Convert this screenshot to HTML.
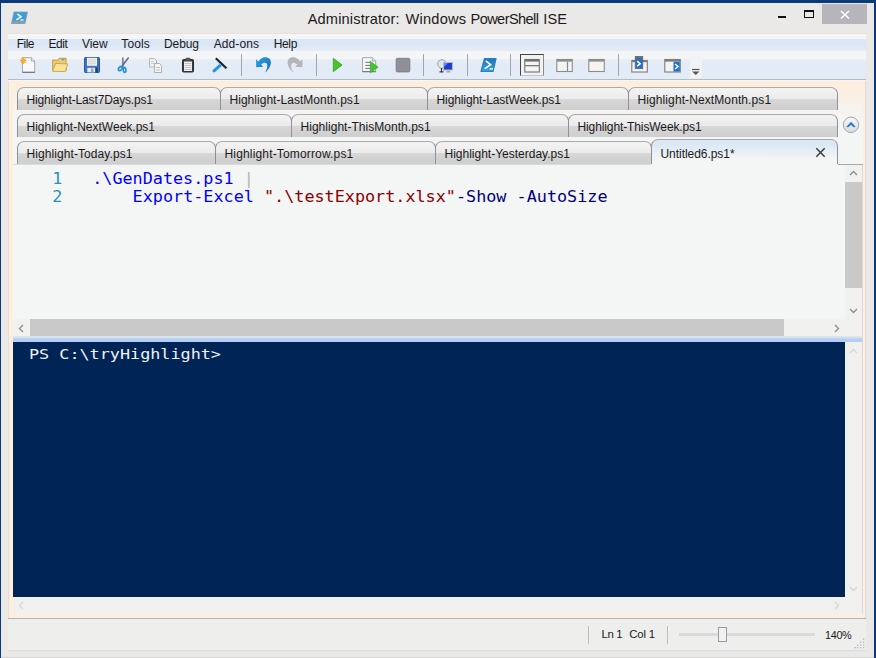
<!DOCTYPE html>
<html lang="en">
<head>
<meta charset="utf-8">
<title>Administrator: Windows PowerShell ISE</title>
<style>
html,body{margin:0;padding:0;}
body{width:876px;height:658px;overflow:hidden;background:#0a3a7c;font-family:"Liberation Sans",sans-serif;}
#win{position:absolute;left:0;top:0;width:876px;height:658px;background:#0a3a7c;overflow:hidden;}
.abs{position:absolute;}
#frame{left:1px;top:3px;width:873px;height:655px;background:#ebe9e8;}
#title{left:0;top:9px;width:876px;font-size:14.6px;color:#1a1a1a;line-height:20px;white-space:nowrap;}
#closebtn{left:822px;top:4px;width:45px;height:20px;background:#b5b5bb;}
#panel{left:8px;top:33px;width:858px;height:585px;background:#feeedd;box-shadow:inset 1px 0 0 #eadcd3, inset -1px 0 0 #e6dcd6;}
#menuwrap{left:8px;top:33px;width:858px;height:47.5px;background:#f3f5f7;box-shadow:inset 0 1px 0 #e8dfda;}
.band1{left:0;top:6.4px;width:858px;height:11.6px;background:linear-gradient(#dbe6f6,#dce7f6 55%,#e7edf6);}
.band2{left:0;top:26.4px;width:858px;height:20.1px;background:linear-gradient(#e8eef6,#e3ebf6 5px);}
.band3{left:0;top:46.4px;width:858px;height:1.1px;background:#b4bcc8;}
.menu{position:absolute;top:37px;font-size:12px;line-height:14px;color:#1a1a1a;white-space:nowrap;}
.sep{position:absolute;top:54px;width:1px;height:21.5px;background:#a2a4aa;}
.ico{position:absolute;overflow:visible;}
#tabbg{left:13px;top:81px;width:850px;height:83px;background:linear-gradient(#feeedd 0,#feeedd 4px,#f9f1e9 20px,#f5f5f3 34px,#f4f6f6 42px);}
.tab{position:absolute;height:23px;border:1px solid #8e8f97;border-top-color:#a9aaae;border-bottom:none;border-radius:7px 7px 0 0;box-sizing:border-box;
 background:linear-gradient(#f5f3f1 0%,#f1f0f0 20%,#ebeaec 49%,#dad7d7 51%,#d4d3d4 68%,#cfcfcf 100%);font-size:12px;line-height:24px;color:#1a1a1a;white-space:nowrap;padding-left:8.5px;}
.tab.r1{top:87px;}
.tab.r2{top:114px;}
.tab.r3{top:141px;}
.tab.act{background:linear-gradient(#dce8f6 0,#dce8f6 4.5px,#e8eff6 12px,#f4f6f6 20px);height:25px;top:139px;line-height:28px;}
#editor{left:13px;top:164px;width:832px;height:155px;background:#f4f6f6;}
.code{position:absolute;font-family:"DejaVu Sans Mono","Liberation Mono",monospace;font-size:16.8px;line-height:19px;white-space:pre;transform:scaleY(0.91);transform-origin:0 15px;}
.ln{color:#2b91af;}
.cmd{color:#0000ff;}
.str{color:#8b0000;}
.par{color:#000080;}
.op{color:#b4b4b4;}
#vs1{left:845px;top:164px;width:18px;height:156px;background:#f1f1f0;}
#vs1 .thumb{position:absolute;left:0;top:18px;width:17px;height:106px;background:#c9c9c9;}
#hs1{left:13px;top:319px;width:850px;height:17px;background:#f1f1f0;}
#hs1 .thumb{position:absolute;left:17px;top:0;width:754px;height:17px;background:#c9c9c9;}
#split{left:13px;top:336px;width:850px;height:6px;background:linear-gradient(#e5e5e6 0,#e5e5e6 1.5px,#cfdff6 1.5px,#b6d0f6 3px,#b2cef6 5px,#b2cef6 6px);}
#console{left:13px;top:341.5px;width:832px;height:255.5px;background:#012456;}
#vs2{left:845px;top:342px;width:18px;height:255px;background:#f0f0ef;}
#hs2{left:13px;top:597px;width:850px;height:17px;background:#f0f0ef;}
#ctext{left:16px;top:2.9px;transform:scaleY(0.86);color:#f2f2f2;}
#status{left:8px;top:619px;width:858px;height:31px;background:#eeeeed;box-shadow:0 1px 0 #e6dcd5, 0 2px 0 #dfe7f2;}
#sline{left:8px;top:618px;width:858px;height:1px;background:#b4b4b8;}
.st{position:absolute;font-size:12px;line-height:14px;color:#1a1a1a;white-space:nowrap;}
#title span{position:absolute;top:0;}
</style>
</head>
<body>
<div id="win">
<div id="frame" class="abs"></div>
<div id="title" class="abs"><span style="left:307.7px;letter-spacing:0.15px">Administrator:</span><span style="left:405.5px;letter-spacing:0.24px">Windows</span><span style="left:470.5px;letter-spacing:-0.59px">PowerShell</span><span style="left:543.3px;letter-spacing:0.1px">ISE</span></div>
<div id="closebtn" class="abs"></div>
<div id="panel" class="abs"></div>
<div id="menuwrap" class="abs"><div class="abs band1"></div><div class="abs band2"></div><div class="abs band3"></div></div>
<div class="menu" style="left:16.8px;letter-spacing:-0.54px">File</div>
<div class="menu" style="left:48.4px;letter-spacing:-0.40px">Edit</div>
<div class="menu" style="left:82px;letter-spacing:-0.05px">View</div>
<div class="menu" style="left:121.3px;letter-spacing:0.08px">Tools</div>
<div class="menu" style="left:164px;letter-spacing:-0.08px">Debug</div>
<div class="menu" style="left:213.8px;letter-spacing:0.07px">Add-ons</div>
<div class="menu" style="left:273.7px;letter-spacing:-0.35px">Help</div>
<svg class="ico" style="left:20px;top:57px" width="16" height="16" viewBox="0 0 16 16"><path d="M2.500 0.700h8.800l3.400 3.400v11.200h-12.200z" fill="#f8f8f8" stroke="#a2a2aa" stroke-width="0.900"/><path d="M2.300 15.300h12.600" stroke="#6a6a72" stroke-width="1"/><path d="M11.300 0.700v3.400h3.400" fill="#e6e6ea" stroke="#a2a2aa" stroke-width="0.900"/><path d="M3.300 0.300v6.600M0 3.600h6.600M1 1.300l4.600 4.600M5.600 1.300l-4.600 4.600" stroke="#f7a81e" stroke-width="1.100"/><circle cx="3.300" cy="3.600" r="1.700" fill="#f9b020"/></svg>
<svg class="ico" style="left:52px;top:57px" width="16" height="16" viewBox="0 0 16 16"><path d="M0.700 13.500v-10.500h5.600l0.800-1.800h7v3.300v9z" fill="#ecca72" stroke="#c49c3c" stroke-width="0.900" stroke-linejoin="round"/><rect x="9.600" y="1.700" width="2.800" height="1.500" fill="#4a9ce6"/><path d="M3.600 6.400l12.100 0.500l-2.500 7.700l-12.700-0.300z" fill="#f8e29a" stroke="#c8a244" stroke-width="0.900" stroke-linejoin="round"/></svg>
<svg class="ico" style="left:84px;top:57px" width="16" height="16" viewBox="0 0 16 16"><rect x="0.500" y="0.500" width="15" height="15" rx="0.800" fill="#3a74c4" stroke="#2a5aa6"/><rect x="3" y="0.800" width="10" height="8" fill="#f4f4f2"/><path d="M4 2.800h8M4 4.800h8M4 6.800h8" stroke="#c8c4b8" stroke-width="0.800"/><rect x="3.300" y="10.800" width="8" height="4.600" fill="#e8ecf2"/><rect x="7" y="11.500" width="2.500" height="3.900" fill="#9aa4b4"/><rect x="11.300" y="10.800" width="2.400" height="4.600" fill="#1f3f7a"/></svg>
<svg class="ico" style="left:116px;top:57px" width="16" height="16" viewBox="0 0 16 16"><path d="M6.800 0.500L7 10.500" stroke="#6c7480" stroke-width="1.500" fill="none"/><path d="M12.600 0.500L5 10.500" stroke="#5b6f86" stroke-width="1.500" fill="none"/><ellipse cx="4.300" cy="11.600" rx="1.500" ry="2.400" fill="none" stroke="#1f8fe0" stroke-width="1.600" transform="rotate(40 4.300 11.600)"/><ellipse cx="8.600" cy="13" rx="1.300" ry="2.400" fill="none" stroke="#1f8fe0" stroke-width="1.600" transform="rotate(-5 8.600 13)"/></svg>
<svg class="ico" style="left:148px;top:57px" width="16" height="16" viewBox="0 0 16 16"><path d="M1.500 1.500h5l2 2v6.500h-7z" fill="#f0f0ee" stroke="#b8b8b8"/><path d="M3 4.500h3M3 6.500h4" stroke="#c4c4c4" stroke-width="0.800"/><path d="M6.500 6.500h5l2 2v7h-7z" fill="#f5f5f3" stroke="#b0b0b0"/><path d="M8 10.500h4M8 13h4" stroke="#b4b4b4" stroke-width="0.800"/></svg>
<svg class="ico" style="left:180px;top:57px" width="16" height="16" viewBox="0 0 16 16"><rect x="2.500" y="2.500" width="11" height="12.500" rx="1" fill="#3a3a40" stroke="#2a2a30"/><rect x="4" y="4.500" width="8" height="9.500" fill="#f2f2f2"/><path d="M4.500 6.500h7M4.500 8.500h7M4.500 10.500h7M4.500 12.500h7" stroke="#b5b5b5" stroke-width="0.800"/><rect x="5.500" y="0.800" width="5" height="3" rx="1" fill="#55555c"/></svg>
<svg class="ico" style="left:211px;top:57px" width="16" height="16" viewBox="0 0 16 16"><path d="M10.300 7.300l-7.300 6.500" stroke="#2492e2" stroke-width="3" stroke-linecap="round"/><path d="M4.800 1.200l10.700 10" stroke="#1c1c24" stroke-width="2"/><path d="M4 2.400l10.600 10" stroke="#7cc0f0" stroke-width="0.900"/></svg>
<svg class="ico" style="left:255px;top:57px" width="16" height="16" viewBox="0 0 16 16"><defs><linearGradient id="ug" x1="0" y1="0" x2="1" y2="1"><stop offset="0" stop-color="#2aa4ea"/><stop offset="1" stop-color="#1765bd"/></linearGradient></defs><path d="M1 2.200L1.200 10.200L8.200 9.700L6.200 7.600C8.500 5.200 12 5.200 12.300 8.200C12.500 10.800 11.400 13.200 10.200 15.600C13.800 12.400 16.400 8.200 15.800 4.200C15 -0.200 9 -1.200 5.200 2.200L3.400 4.400Z" fill="url(#ug)"/></svg>
<svg class="ico" style="left:287px;top:57px" width="16" height="16" viewBox="0 0 16 16"><g transform="translate(16.500 0) scale(-1 1)"><path d="M1 2.200L1.200 10.200L8.200 9.700L6.200 7.600C8.500 5.200 12 5.200 12.300 8.200C12.500 10.800 11.400 13.200 10.200 15.600C13.800 12.400 16.400 8.200 15.800 4.200C15 -0.200 9 -1.200 5.200 2.200L3.400 4.400Z" fill="#b4b5ba"/></g></svg>
<svg class="ico" style="left:329px;top:57px" width="16" height="16" viewBox="0 0 16 16"><path d="M4.300 1.300l8.800 6.700l-8.800 6.700z" fill="#45c42e" stroke="#35a226" stroke-width="0.800"/></svg>
<svg class="ico" style="left:361px;top:57px" width="17" height="16" viewBox="0 0 17 16"><path d="M1.500 0.600h9.800l3.400 3.400v10.600h-13.200z" fill="#f7f7f7" stroke="#a0a0a8" stroke-width="0.900"/><path d="M1.300 14.700h13.600" stroke="#70707a" stroke-width="1"/><path d="M11.300 0.600v3.400h3.400" fill="#e8e8ec" stroke="#a0a0a8" stroke-width="0.900"/><path d="M4.300 5.300h5M4.300 8.400h5M4.300 11.400h5" stroke="#6a7088" stroke-width="1"/><path d="M9.300 4.200l7.800 6l-7.800 5.600z" fill="#46c42e" stroke="#38a828" stroke-width="0.700"/></svg>
<svg class="ico" style="left:395px;top:57px" width="16" height="16" viewBox="0 0 16 16"><rect x="1.200" y="1.300" width="13.600" height="13.600" rx="1.200" fill="#8f9097" stroke="#808189"/></svg>
<svg class="ico" style="left:437px;top:57px" width="16" height="16" viewBox="0 0 16 16"><circle cx="5" cy="7" r="4.300" fill="#dfe5ea" stroke="#9aa3ab"/><path d="M4.500 11v3.500M2.500 14.800h4" stroke="#3a3a3a" stroke-width="1.200"/><rect x="6.500" y="5.500" width="9" height="7.500" fill="#1a3fd0" stroke="#b8bcc4"/><path d="M7 6l4 0 -4 4z" fill="#5a86ee"/><path d="M9 14.800h4.500M11.200 13v2" stroke="#c9a27a" stroke-width="1.200"/></svg>
<svg class="ico" style="left:480px;top:57px" width="17" height="16" viewBox="0 0 17 16"><defs><linearGradient id="pg" x1="0" y1="0" x2="0" y2="1"><stop offset="0" stop-color="#1b74bc"/><stop offset="1" stop-color="#38a4e4"/></linearGradient></defs><path d="M4.500 1.500h11.500l-3 13h-12z" fill="url(#pg)" stroke="#2a7fc4" stroke-width="1.200" stroke-linejoin="round"/><path d="M5.800 3.800l4.700 3.800l-5.700 4" fill="none" stroke="#fff" stroke-width="1.700"/><path d="M9.800 11.800h3.200" stroke="#e8f2fa" stroke-width="1.600"/></svg>
<div class="abs" style="left:520px;top:54px;width:24px;height:22px;box-sizing:border-box;border:1px solid #444;border-bottom-color:#c4c4c4;border-right-color:#8a8a8a;background:#f1f2f4"></div>
<svg class="ico" style="left:524px;top:57px" width="16" height="16" viewBox="0 0 16 16"><rect x="0.800" y="2.500" width="14.500" height="12.500" fill="#f5f5f5" stroke="#707070" stroke-width="1.100"/><path d="M1 3.600h14" stroke="#707070" stroke-width="2"/><path d="M1 8.700h14" stroke="#707070" stroke-width="1.200"/></svg>
<svg class="ico" style="left:556px;top:57px" width="17" height="16" viewBox="0 0 17 16"><rect x="0.800" y="2.500" width="15.500" height="12" fill="#f3f3f3" stroke="#8c8c8c" stroke-width="1.100"/><path d="M1 3.600h15" stroke="#8c8c8c" stroke-width="2"/><path d="M11.500 4.500v10" stroke="#8c8c8c" stroke-width="1.200"/></svg>
<svg class="ico" style="left:588px;top:57px" width="17" height="16" viewBox="0 0 17 16"><rect x="0.800" y="2.500" width="15.500" height="12" fill="#f7f4f0" stroke="#8c8c8c" stroke-width="1.100"/><path d="M1 3.600h15" stroke="#8c8c8c" stroke-width="2"/></svg>
<svg class="ico" style="left:631px;top:56px" width="17" height="17" viewBox="0 0 17 17"><rect x="0.800" y="4.500" width="15.500" height="11.500" fill="#f3f3f3" stroke="#7c7c7c" stroke-width="1.100"/><path d="M1 5.300h15" stroke="#7c7c7c" stroke-width="1.800"/><rect x="4.300" y="0.600" width="7.400" height="12" fill="#1d6fd0" stroke="#6a6a6a" stroke-width="0.900"/><path d="M4.300 1.500h7.400" stroke="#6e6e6e" stroke-width="2"/><path d="M6.200 5.200l3 2.500l-3 2.500" fill="none" stroke="#fff" stroke-width="1.500"/></svg>
<svg class="ico" style="left:664px;top:57px" width="17" height="16" viewBox="0 0 17 16"><rect x="0.800" y="2.500" width="15.500" height="12.500" fill="#f3f3f3" stroke="#7c7c7c" stroke-width="1.100"/><path d="M1 3.600h15" stroke="#7c7c7c" stroke-width="2"/><rect x="9.500" y="4.800" width="6.300" height="9.700" fill="#1d6fd0"/><path d="M11 7l3 2.500l-3 2.500" fill="none" stroke="#fff" stroke-width="1.500"/></svg>
<div class="abs" style="left:690px;top:56px;width:12px;height:22px;background:#f1f3f6"></div>
<svg class="ico" style="left:692px;top:68px" width="8" height="8" viewBox="0 0 8 8"><path d="M0 1.500h7.500" stroke="#555" stroke-width="1.200"/><path d="M0 3.500h7.500l-3.750 3.500z" fill="#555"/></svg>
<div class="sep" style="left:241px"></div>
<div class="sep" style="left:316px"></div>
<div class="sep" style="left:423px"></div>
<div class="sep" style="left:467px"></div>
<div class="sep" style="left:510px"></div>
<div class="sep" style="left:618px"></div>

<div id="tabbg" class="abs"></div>
<div class="tab r1" style="left:17px;width:204px;letter-spacing:-0.16px">Highlight-Last7Days.ps1</div>
<div class="tab r1" style="left:220px;width:208px;letter-spacing:0.03px">Highlight-LastMonth.ps1</div>
<div class="tab r1" style="left:427px;width:202px;letter-spacing:-0.1px">Highlight-LastWeek.ps1</div>
<div class="tab r1" style="left:628px;width:210px;letter-spacing:0.1px">Highlight-NextMonth.ps1</div>
<div class="tab r2" style="left:17px;width:275px;letter-spacing:0px">Highlight-NextWeek.ps1</div>
<div class="tab r2" style="left:291px;width:278px;letter-spacing:0.03px">Highlight-ThisMonth.ps1</div>
<div class="tab r2" style="left:568px;width:270px;letter-spacing:-0.11px">Highlight-ThisWeek.ps1</div>
<div class="tab r3" style="left:17px;width:199px;letter-spacing:0.08px">Highlight-Today.ps1</div>
<div class="tab r3" style="left:215px;width:221px;letter-spacing:0.16px">Highlight-Tomorrow.ps1</div>
<div class="tab r3" style="left:435px;width:217px;letter-spacing:0px">Highlight-Yesterday.ps1</div>
<div class="tab r3 act" style="left:651px;width:187px;letter-spacing:-0.05px">Untitled6.ps1*</div>

<div id="editor" class="abs">
<div class="code" style="left:39.3px;top:4.7px"><span class="ln">1</span></div>
<div class="code" style="left:39.3px;top:22.5px"><span class="ln">2</span></div>
<div class="code" style="left:79.2px;top:4.7px"><span class="cmd">.\GenDates.ps1</span> <span class="op">|</span></div>
<div class="code" style="left:79.2px;top:22.5px">    <span class="cmd">Export-Excel</span> <span class="str">".\testExport.xlsx"</span><span class="par">-Show</span> <span class="par">-AutoSize</span></div>
</div>
<div id="vs1" class="abs"><div class="thumb"></div></div>
<div id="hs1" class="abs"><div class="thumb"></div></div>
<div id="split" class="abs"></div>
<div id="console" class="abs"><div id="ctext" class="code">PS C:\tryHighlight&gt;</div></div>
<div id="vs2" class="abs"></div>
<div id="hs2" class="abs"></div>
<div id="sline" class="abs"></div>
<div id="status" class="abs"></div>
<div class="abs" style="left:588px;top:625.5px;width:1px;height:18.5px;background:#bcbcc0;box-shadow:1px 0 0 #f3f3f4"></div>
<div class="abs" style="left:667px;top:625.5px;width:1px;height:18.5px;background:#bcbcc0;box-shadow:1px 0 0 #f3f3f4"></div>
<div class="st" style="left:601.6px;top:627px;font-size:11.4px;letter-spacing:-0.42px">Ln 1</div><div class="st" style="left:629.3px;top:627px;font-size:11.4px;letter-spacing:-0.2px">Col 1</div>
<div class="abs" style="left:679px;top:633px;width:136px;height:3px;background:#d9dadc"></div>
<div class="abs" style="left:718px;top:627px;width:9px;height:15px;box-sizing:border-box;border:1px solid #9a9a9e;background:#f1f1f1"></div>
<div class="st" style="left:825px;top:628px;font-size:10.8px;letter-spacing:-0.3px">140%</div>
<svg class="ico" style="left:854px;top:637px" width="12" height="12" viewBox="0 0 12 12"><g fill="#b4b6be"><rect x="9" y="1.500" width="1.300" height="1.300"/><rect x="6" y="4.500" width="1.300" height="1.300"/><rect x="9" y="4.500" width="1.300" height="1.300"/><rect x="3" y="7.500" width="1.300" height="1.300"/><rect x="6" y="7.500" width="1.300" height="1.300"/><rect x="9" y="7.500" width="1.300" height="1.300"/><rect x="0.500" y="10" width="1.300" height="1.300"/><rect x="3" y="10" width="1.300" height="1.300"/><rect x="6" y="10" width="1.300" height="1.300"/><rect x="9" y="10" width="1.300" height="1.300"/></g></svg>
<svg class="ico" style="left:11px;top:11px" width="17" height="14" viewBox="0 0 17 14"><path d="M3 1h13.500l-2.500 11.500h-13.500z" fill="#3aa0dc" stroke="#8a9aa8" stroke-width="0.800"/><path d="M1.200 10h13.300l-0.500 2.500h-13.300z" fill="#8f9ca6"/><path d="M6.500 3l3.500 2.800l-4.500 3" fill="none" stroke="#fff" stroke-width="1.500"/><path d="M9.500 9h3" stroke="#fff" stroke-width="1.300"/></svg>
<div class="abs" style="left:778px;top:16px;width:8px;height:2px;background:#111"></div>
<div class="abs" style="left:804px;top:10px;width:10px;height:8px;box-sizing:border-box;border:1px solid #111;border-top-width:2px"></div>
<svg class="ico" style="left:840px;top:10px" width="10" height="10" viewBox="0 0 10 10"><path d="M1 1l8 7.500M9 1l-8 7.500" stroke="#fff" stroke-width="1.600"/></svg>
<svg class="ico" style="left:815px;top:147px" width="11" height="11" viewBox="0 0 11 11"><path d="M1.300 1.300l8.400 8.400M9.700 1.300l-8.400 8.400" stroke="#3e3e3e" stroke-width="1.500"/></svg>
<svg class="ico" style="left:842px;top:116px" width="18" height="18" viewBox="0 0 18 18"><defs><linearGradient id="cg" x1="0" y1="0" x2="0" y2="1"><stop offset="0" stop-color="#f6f6f6"/><stop offset="1" stop-color="#dcdcde"/></linearGradient></defs><circle cx="9" cy="8.800" r="7.700" fill="url(#cg)" stroke="#a6a7ac" stroke-width="1"/><path d="M4.800 10.800l4.200-4.600l4.200 4.600l-1.800 0l-2.400-2.400l-2.400 2.400z" fill="#1f6fd0" stroke="#1f6fd0" stroke-width="0.600" stroke-linejoin="round"/></svg>
<svg class="ico" style="left:849px;top:169px" width="9" height="9" viewBox="0 0 9 9"><path d="M1 6l3.500-3.500l3.500 3.500" fill="none" stroke="#8c8c8c" stroke-width="1.300"/></svg>
<svg class="ico" style="left:849px;top:306px" width="9" height="9" viewBox="0 0 9 9"><path d="M1 3l3.500 3.500l3.500-3.500" fill="none" stroke="#8c8c8c" stroke-width="1.300"/></svg>
<svg class="ico" style="left:17px;top:324px" width="9" height="9" viewBox="0 0 9 9"><path d="M6 1l-3.500 3.500l3.500 3.500" fill="none" stroke="#8c8c8c" stroke-width="1.300"/></svg>
<svg class="ico" style="left:832px;top:324px" width="9" height="9" viewBox="0 0 9 9"><path d="M3 1l3.500 3.500l-3.500 3.500" fill="none" stroke="#8c8c8c" stroke-width="1.300"/></svg>
<svg class="ico" style="left:849px;top:347px" width="9" height="9" viewBox="0 0 9 9"><path d="M1 6l3.500-3.500l3.500 3.500" fill="none" stroke="#d6d6d8" stroke-width="1.300"/></svg>
<svg class="ico" style="left:849px;top:584px" width="9" height="9" viewBox="0 0 9 9"><path d="M1 3l3.500 3.500l3.500-3.500" fill="none" stroke="#d6d6d8" stroke-width="1.300"/></svg>
<svg class="ico" style="left:17px;top:601px" width="9" height="9" viewBox="0 0 9 9"><path d="M6 1l-3.500 3.500l3.500 3.500" fill="none" stroke="#d6d6d8" stroke-width="1.300"/></svg>
<svg class="ico" style="left:832px;top:601px" width="9" height="9" viewBox="0 0 9 9"><path d="M3 1l3.500 3.500l-3.500 3.500" fill="none" stroke="#d6d6d8" stroke-width="1.300"/></svg>
<div class="abs" style="left:838px;top:164px;width:25px;height:1px;background:#a8a8ac"></div>
<div class="abs" style="left:13px;top:164px;width:638px;height:1px;background:#d9dbdc"></div>
<div class="abs" style="left:862px;top:165px;width:1px;height:449px;background:#dadada"></div>
<div class="abs" style="left:1px;top:657px;width:873px;height:1px;background:#d4d4d4"></div>
<!--EXTRA2-->
</div>
</body>
</html>
